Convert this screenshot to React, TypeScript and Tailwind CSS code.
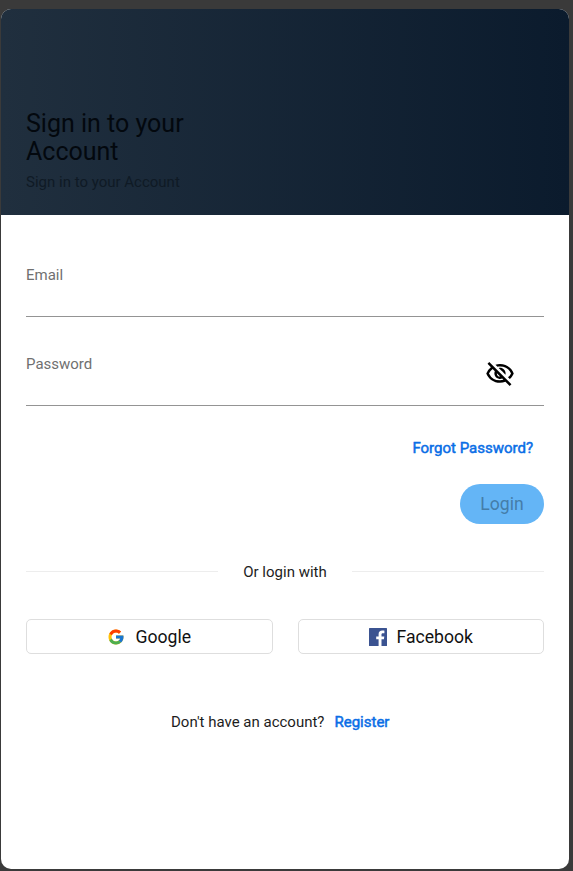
import { useState } from 'react';
import { FcGoogle } from 'react-icons/fc';
import { MdOutlineVisibilityOff } from 'react-icons/md';

function Field({ label, children }: { label: string; children?: React.ReactNode }) {
  return (
    <div className="flex h-[89px] items-start justify-between border-b border-[#949494]">
      <span className="mt-[37px] text-[15px] leading-5 text-[#707070]">{label}</span>
      {children}
    </div>
  );
}

function FacebookLogo() {
  return (
    <svg className="h-[18px] w-[18px]" viewBox="0 0 18 18">
      <rect width="18" height="18" rx="0.5" fill="#3b5391" />
      <path
        d="M9.6 18v-6.8H7.2V8.5h2.4V6.3c0-2.4 1.4-3.7 3.6-3.7 1 0 1.9.1 2.2.1v2.5h-1.5c-1.2 0-1.4.6-1.4 1.4v1.9h2.8l-.4 2.7h-2.4V18z"
        fill="#fff"
      />
    </svg>
  );
}

export default function App() {
  const [hidden] = useState(true);
  return (
    <div className="h-[871px] w-[573px] bg-[#3a3a3a] pt-[9px] pl-px font-['Roboto',sans-serif] font-[390]">
      <main className="flex h-[860px] w-[567.5px] flex-col overflow-hidden rounded-[10px] bg-white">
        <header className="h-[206px] shrink-0 bg-linear-to-r from-[#202f3e] to-[#0b1b2d] pt-[101px] pl-[25px]">
          <h1 className="w-[170px] text-[25px] leading-7 font-[385] text-[#03080e]">Sign in to your Account</h1>
          <p className="mt-[6px] text-[15px] leading-5 text-[#0f1a25]">Sign in to your Account</p>
        </header>
        <section className="flex w-[568px] flex-col px-[25px]">
          <div className="h-[13px]" />
          <Field label="Email" />
          <Field label="Password">
            {hidden && <MdOutlineVisibilityOff className="mt-[42px] mr-[29px] size-[30px] text-black" />}
          </Field>
          <a className="mt-8 mr-[11px] self-end text-[15px] leading-5 font-normal text-[#0a6ee6] [-webkit-text-stroke:0.5px_#0a6ee6]">
            Forgot Password?
          </a>
          <button className="mt-[26px] h-10 w-[84px] self-end rounded-full bg-[#64b5f6] text-[17.6px] leading-6 text-[#457da9]">
            Login
          </button>
          <div className="mt-[38px] flex h-5 items-center gap-[25px]">
            <span className="-mt-px h-px flex-1 bg-[#ededed]" />
            <span className="text-[15px] leading-5 text-[#1d1d1d]">Or login with</span>
            <span className="-mt-px h-px flex-1 bg-[#ededed]" />
          </div>
          <div className="mt-[37px] grid grid-cols-2 gap-[25px]">
            <button className="flex h-[35px] items-center justify-center gap-[10px] rounded-[5px] border border-[#dedede] text-[17.6px] leading-6 text-[#111]">
              <FcGoogle className="size-[18px]" />
              <span className="pt-px">Google</span>
            </button>
            <button className="flex h-[35px] items-center justify-center gap-[10px] rounded-[5px] border border-[#dedede] text-[17.6px] leading-6 text-[#111]">
              <FacebookLogo />
              <span className="pt-px">Facebook</span>
            </button>
          </div>
          <p className="mt-[58px] flex gap-[10px] pl-[145px] text-[15px] leading-5 text-[#1d1d1d]">
            <span>Don't have an account?</span>
            <a className="font-normal text-[#0a6ee6] [-webkit-text-stroke:0.5px_#0a6ee6]">Register</a>
          </p>
        </section>
      </main>
    </div>
  );
}
